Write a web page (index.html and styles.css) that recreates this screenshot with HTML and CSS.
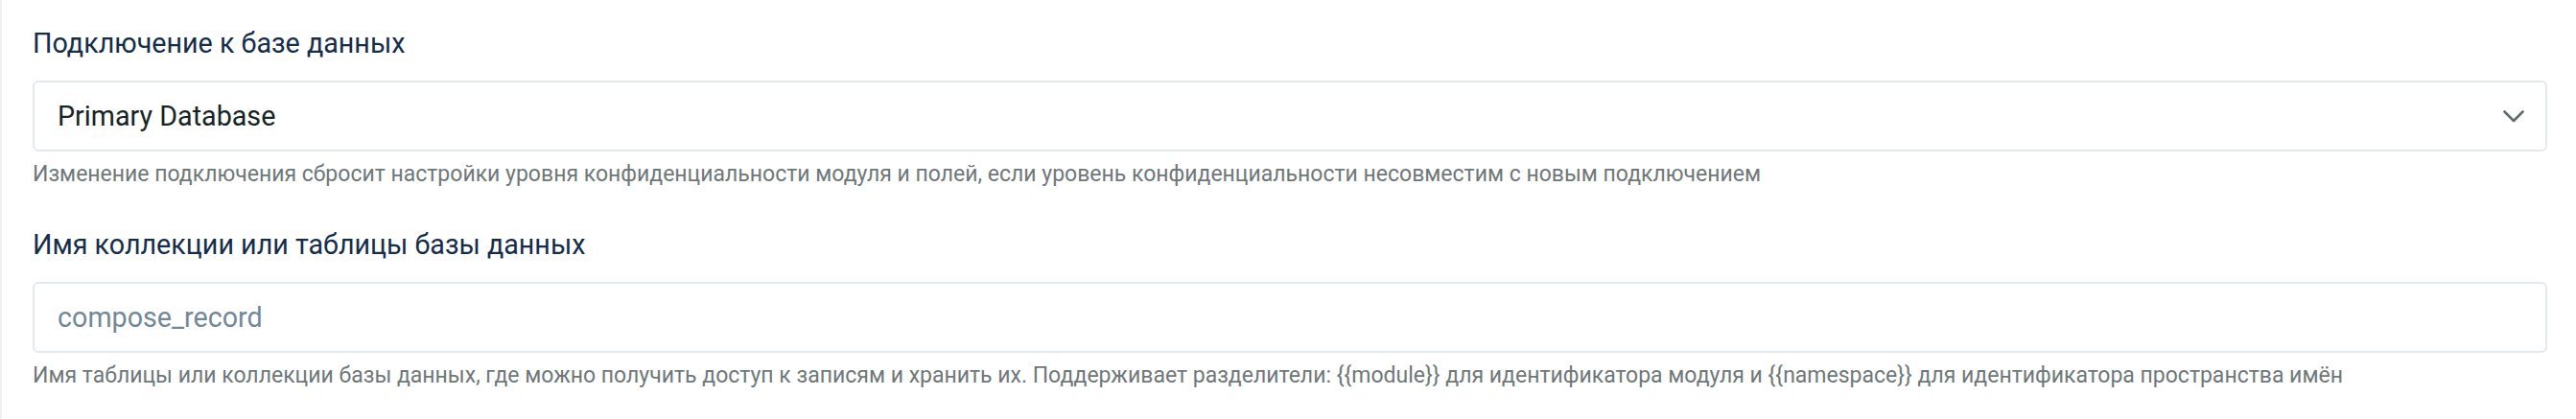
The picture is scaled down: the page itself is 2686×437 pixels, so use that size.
FILE: index.html
```html
<!DOCTYPE html>
<html lang="ru">
<head>
<meta charset="utf-8">
<title>Настройки модуля</title>
<link rel="stylesheet" href="styles.css">
</head>
<body>
<div class="panel">
  <div class="field">
    <label class="label">Подключение к базе данных</label>
    <div class="control select">
      <span class="value">Primary Database</span>
      <svg class="chevron" width="22" height="13" viewBox="0 0 22 13"><path d="M1.5 1.5 L11 11 L20.5 1.5" fill="none" stroke="#5f6b6b" stroke-width="2.6" stroke-linecap="round" stroke-linejoin="round"/></svg>
    </div>
    <p class="help">Изменение подключения сбросит настройки уровня конфиденциальности модуля и полей, если уровень конфиденциальности несовместим с новым подключением</p>
  </div>
  <div class="field">
    <label class="label">Имя коллекции или таблицы базы данных</label>
    <div class="control input">
      <span class="placeholder">compose_record</span>
    </div>
    <p class="help">Имя таблицы или коллекции базы данных, где можно получить доступ к записям и хранить их. Поддерживает разделители: {{module}} для идентификатора модуля и {{namespace}} для идентификатора пространства имён</p>
  </div>
</div>
</body>
</html>
```

FILE: styles.css
```css
html, body {
  margin: 0;
  padding: 0;
  background: #ffffff;
}
body {
  font-family: Roboto, "Noto Sans", "Liberation Sans", sans-serif;
  height: 437px;
  overflow: hidden;
}
.panel {
  border-left: 2px solid #eef0f3;
  padding: 24px 30px 0 32px;
  height: 437px;
  box-sizing: border-box;
}
.field {
  display: flex;
  flex-direction: column;
}
.field + .field {
  margin-top: 38px;
}
.label {
  font-size: 28.7px;
  line-height: 42px;
  color: #162d4a;
  margin-bottom: 18px;
}
.control {
  height: 74px;
  box-sizing: border-box;
  border: 2px solid #e4e9ee;
  border-radius: 6px;
  display: flex;
  align-items: center;
  padding: 0 22px 0 24px;
  font-size: 28.7px;
}
.select {
  justify-content: space-between;
}
.value {
  color: #162425;
}
.placeholder {
  color: #728898;
}
.chevron {
  display: block;
}
.help {
  margin: 10px 0 0;
  font-size: 23px;
  line-height: 28px;
  color: #6f7879;
}
```
